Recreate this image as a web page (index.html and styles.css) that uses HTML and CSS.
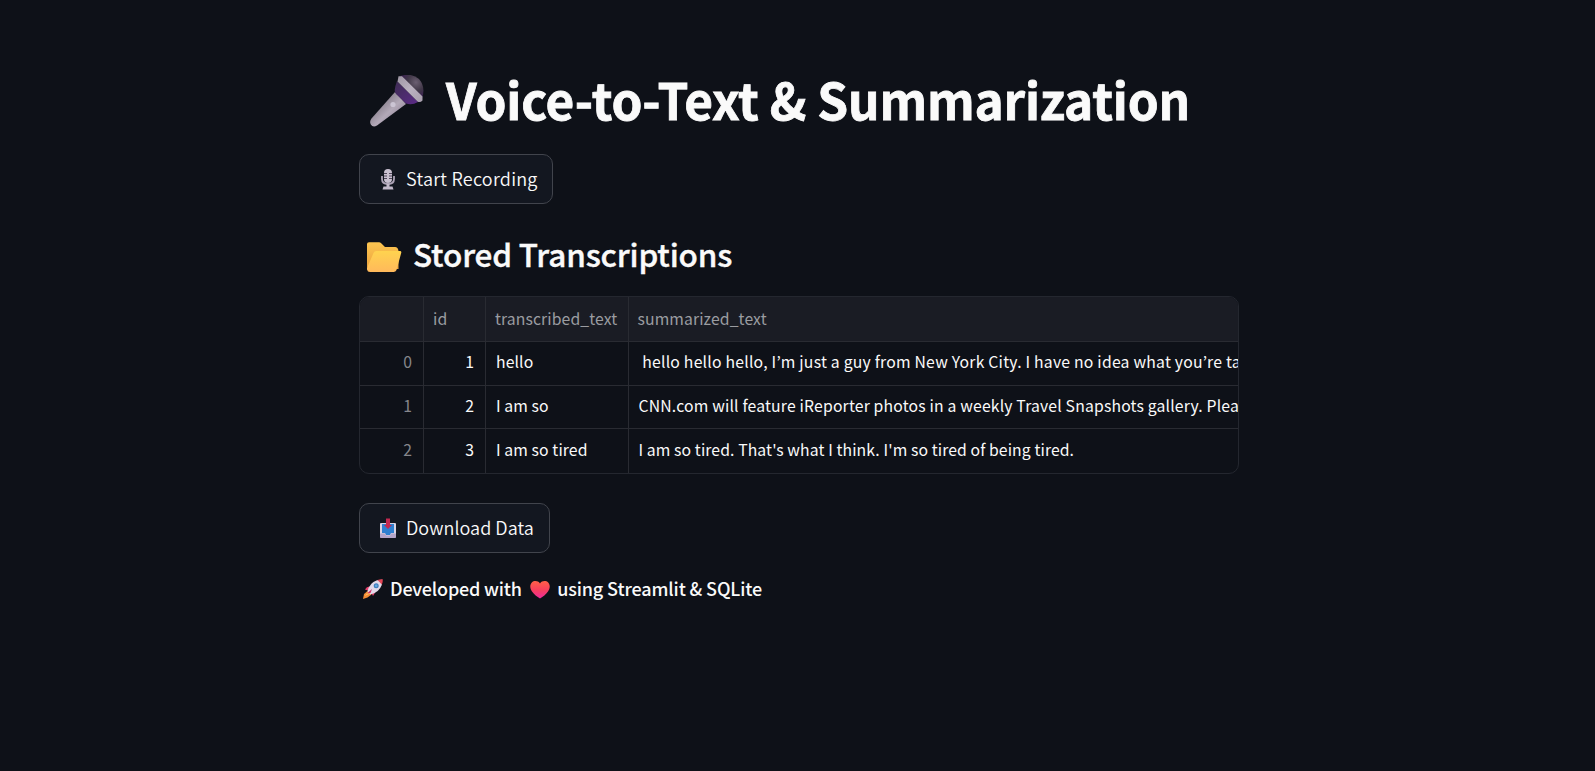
FILE: index.html
```html
<!DOCTYPE html>
<html lang="en">
<head>
<meta charset="utf-8">
<title>Voice-to-Text &amp; Summarization</title>
<link rel="stylesheet" href="styles.css">
</head>
<body>
<main class="app">
  <h1 class="title">
    <svg class="title-icon" viewBox="0 0 54 52">
      <defs>
        <linearGradient id="handle" x1="0" y1="0" x2="1" y2="1"><stop offset=".25" stop-color="#817985"/><stop offset=".55" stop-color="#b3a9b8"/><stop offset=".8" stop-color="#94869b"/></linearGradient>
        <radialGradient id="head" cx=".68" cy=".32" r=".65"><stop offset="0" stop-color="#6b5f72"/><stop offset=".55" stop-color="#413848"/><stop offset="1" stop-color="#3a2150"/></radialGradient>
        <linearGradient id="collar" x1="0" y1="0" x2="1" y2="1"><stop offset="0" stop-color="#3d2d52"/><stop offset="1" stop-color="#5b2a87"/></linearGradient>
        <linearGradient id="ring" x1="0" y1="0" x2="1" y2="1"><stop offset="0" stop-color="#9f97a4"/><stop offset=".5" stop-color="#bbb2c1"/><stop offset="1" stop-color="#a99fae"/></linearGradient>
      </defs>
      <path d="M25 17 36 29 7 50.5Q3 53 .8 49.5Q-.8 46.500 1.500 43.500Z" fill="url(#handle)"/>
      <path d="M27 6Q23 17 26 19L36 28.500Q42 30.500 48 27Z" fill="url(#collar)"/>
      <path d="M30 1Q42-2.500 49 4Q56 12 52 23.500Z" fill="url(#head)"/>
      <path d="M28.500 1.200H32L52.500 21.500V25.500Q50 28 47.500 26.500L27.500 6.500Z" fill="url(#ring)"/>
      <circle cx="23" cy="29.500" r="2.600" fill="#cbc4d3"/>
    </svg>
    <span class="title-text">Voice-to-Text &amp; Summarization</span>
  </h1>

  <button class="btn btn-record">
    <svg class="btn-icon" viewBox="0 0 16 21">
      <rect x="4" y="0" width="8" height="14" rx="4" fill="#c9c0d0"/>
      <path d="M4 4.500H7M9 4.500H12M4 7H7M9 7H12M4 9.500H7M9 9.500H12" stroke="#50475a" stroke-width="1"/>
      <path d="M2 7V10Q2 15 8 15T14 10V7" fill="none" stroke="#aea4b7" stroke-width="1.800"/>
      <path d="M6.500 15H9.500V17.500H12.500L13.500 20.500H2.500L3.500 17.500H6.500Z" fill="#c3bacb"/>
    </svg>
    <span class="btn-text record-text">Start Recording</span>
  </button>

  <h2 class="subtitle">
    <svg class="folder" viewBox="0 0 35 31">
      <defs>
        <linearGradient id="back" x1="0" y1="0" x2="0" y2="1"><stop offset="0" stop-color="#fdc651"/><stop offset="1" stop-color="#eba23c"/></linearGradient>
        <linearGradient id="front" x1="0" y1="0" x2="0" y2="1"><stop offset="0" stop-color="#ffd34f"/><stop offset="1" stop-color="#ffb95b"/></linearGradient>
      </defs>
      <path d="M0 2Q0 .3 2 .3H12Q13.300.300 14.200 1.200L18 5H28Q31 5 31.500 9V27H2Q0 27 0 24Z" fill="url(#back)"/>
      <path d="M9.500 9H33Q34.700 9 34.200 11L29.500 28Q28.700 30 26.500 30H3Q.5 30 0 27.500V26L6.500 11Q7.300 9 9.500 9Z" fill="url(#front)"/>
    </svg>
    <span class="subtitle-text">Stored Transcriptions</span>
  </h2>

  <section class="grid">
    <div class="row head"><div class="cell"></div><div class="cell">id</div><div class="cell">transcribed_text</div><div class="cell">summarized_text</div></div>
    <div class="row"><div class="cell num index">0</div><div class="cell num">1</div><div class="cell">hello</div><div class="cell wide">&nbsp;hello hello hello, I’m just a guy from New York City. I have no idea what you’re ta</div></div>
    <div class="row short"><div class="cell num index">1</div><div class="cell num">2</div><div class="cell">I am so</div><div class="cell medium">CNN.com will feature iReporter photos in a weekly Travel Snapshots gallery. Plea</div></div>
    <div class="row"><div class="cell num index">2</div><div class="cell num">3</div><div class="cell">I am so tired</div><div class="cell">I am so tired. That's what I think. I'm so tired of being tired.</div></div>
  </section>

  <button class="btn btn-download">
    <svg class="btn-icon" viewBox="0 0 16 21">
      <rect x="0" y="5" width="16" height="14.500" rx="1" fill="#d9d3e3"/>
      <path d="M2 6H14V15H11L10 17H6L5 15H2Z" fill="#2f7fd0"/>
      <path d="M0 15.500H5L6 17.500H10L11 15.500H16V19Q16 20 15 20H1Q0 20 0 19Z" fill="#b4a5ca"/>
      <path d="M6 .5H10V7H12L8 11 4 7H6Z" fill="#c4284f"/>
    </svg>
    <span class="btn-text download-text">Download Data</span>
  </button>

  <p class="footer">
    <svg class="rocket" viewBox="0 0 20 20">
      <path d="M4 10 8 7.500 13 12 10 17 8.500 14 5.500 11Z" fill="#e8416d"/>
      <path d="M2 10.500Q4 6.500 9 8L6 12Z" fill="#e8416d"/>
      <path d="M4.500 12 8.500 15.500 4.500 18.500 0 20 1 15Z" fill="#f28b35"/>
      <path d="M1.500 17 5 13 6.500 15Z" fill="#ffbd58"/>
      <path d="M4.500 12.500Q6 4 14 1.200L19 .8 18.800 6Q16 13.500 7.500 15.500Z" fill="#e2d9e8"/>
      <path d="M14.500 1Q17 0 19.800.2Q20 3 18.800 5.500Z" fill="#e34556"/>
      <circle cx="13.200" cy="6.800" r="2.500" fill="#407fbd"/><circle cx="13.200" cy="6.800" r="1.300" fill="#67a9df"/>
      <path d="M4 14.500 9 10 7.500 14Z" fill="#d22d66"/>
    </svg>
    <span class="dev">Developed with</span>
    <svg class="heart" viewBox="0 0 20 18">
      <defs><linearGradient id="love" x1="0" y1="0" x2="0" y2="1"><stop offset="0" stop-color="#ff6048"/><stop offset=".5" stop-color="#f7405c"/><stop offset="1" stop-color="#ee2b9c"/></linearGradient></defs>
      <path d="M10 2.500C12-.5 16-.5 18.200 1.500C20.500 4 20 8 18 10.500C16 13.500 13 15.500 10 17.500C7 15.500 4 13.500 2 10.500C0 8-.5 4 1.800 1.500C4-.5 8-.5 10 2.500Z" fill="url(#love)"/>
    </svg>
    <span class="using">using Streamlit &amp; SQLite</span>
  </p>
</main>
</body>
</html>
```
FILE: styles.css
```css
* { box-sizing: border-box; }
body {
  margin: 0;
  height: 771px;
  overflow: hidden;
  background: #0e1118;
  color: #fafafa;
  font-family: "Noto Sans CJK JP", "Noto Sans", sans-serif;
}
.app { width: 880px; margin-left: 359px; padding-top: 65px; }
svg { display: block; flex: none; }
span { white-space: nowrap; }

.title { display: flex; height: 67px; margin: 0; padding-left: 11px; font-size: 49.5px; line-height: 67px; font-weight: 700; }
.title-icon { width: 54px; height: 52px; margin: 10px 22px 0 0; }
.title-text { letter-spacing: -.17px; -webkit-text-stroke: .8px #fafafa; }

.btn {
  display: flex;
  align-items: center;
  height: 50px;
  padding: 0 0 0 20px;
  border: 1px solid #41444c;
  border-radius: 10px;
  background: #131720;
  color: #fafafa;
  font: 350 18px/46px "Noto Sans CJK JP", "Noto Sans", sans-serif;
}
.btn-record { width: 194px; margin-top: 22px; }
.btn-download { width: 191px; margin-top: 29px; }
.btn-icon { width: 16px; height: 21px; margin: 0 10px 0 0; }
.btn-text { height: 48px; }
.record-text { letter-spacing: .25px; }
.download-text { letter-spacing: .05px; }

.subtitle { display: flex; height: 50px; margin: 24px 0 0; padding-left: 8px; font-size: 31.5px; line-height: 50px; font-weight: 500; }
.folder { width: 35px; height: 31px; margin: 14px 11px 0 0; }
.subtitle-text { letter-spacing: -.15px; -webkit-text-stroke: .4px #fafafa; }

.grid { height: 178px; margin-top: 18px; border: 1px solid #24272f; border-radius: 10px; overflow: hidden; font-size: 15.75px; letter-spacing: .1px; }
.row { display: grid; grid-template-columns: 64px 62px 143px 1fr; height: 44px; }
.row.short { height: 43px; }
.head { height: 45px; background: #1a1c24; color: #9b9ca1; }
.cell { min-width: 0; overflow: hidden; padding: 0 11px 0 10px; border-right: 1px solid #292b32; border-bottom: 1px solid #292b32; line-height: 40px; white-space: nowrap; }
.head .cell { padding-right: 0; padding-left: 9px; line-height: 44px; }
.cell:last-child { padding-right: 0; padding-left: 9.5px; border-right: 0; }
.head .cell:last-child { padding-left: 8.5px; }
.row:last-child .cell { border-bottom: 0; line-height: 42px; }
.num { text-align: right; }
.index { color: #85868b; }
.wide { letter-spacing: .22px; }
.medium { letter-spacing: .17px; }

.footer { display: flex; height: 30px; margin: 22px 0 0; padding-left: 4px; font-size: 18px; line-height: 27px; font-weight: 500; }
.rocket { width: 20px; height: 20px; margin: 4px 7px 0 0; }
.dev { letter-spacing: -.2px; }
.heart { width: 20px; height: 18px; margin: 6px 7.5px 0 8px; }
.using { letter-spacing: -.12px; }
```
